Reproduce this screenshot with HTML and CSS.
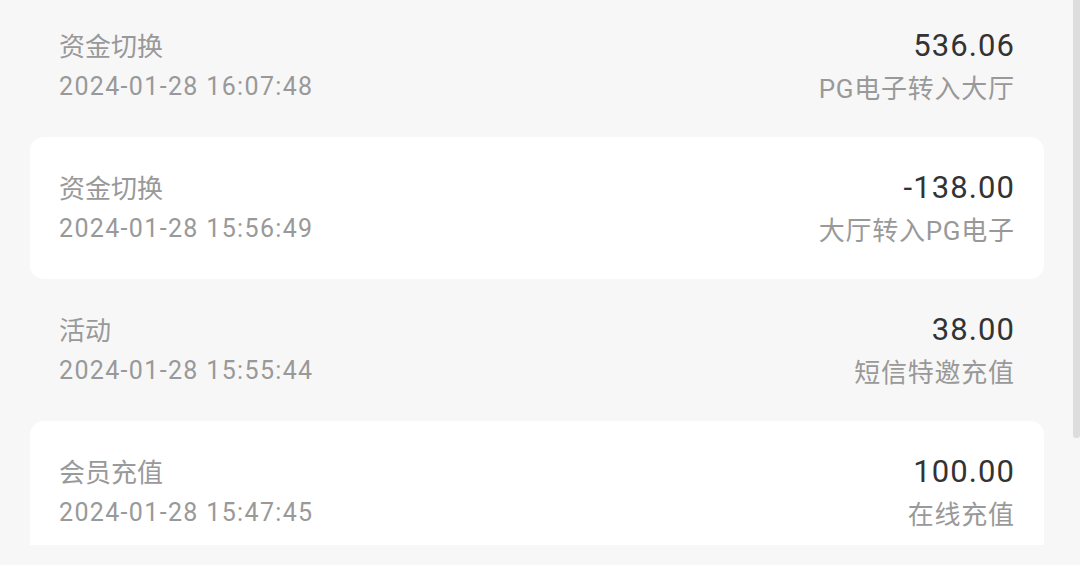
FILE: index.html
```html
<!DOCTYPE html>
<html lang="zh-CN">
<head>
<meta charset="utf-8">
<link rel="stylesheet" href="styles.css">
</head>
<body>
<div class="viewport">
  <div class="list">
    <div class="row">
      <div class="left"><div class="title">资金切换</div><div class="time">2024-01-28 16:07:48</div></div>
      <div class="right"><div class="amount">536.06</div><div class="desc">PG电子转入大厅</div></div>
    </div>
    <div class="row card">
      <div class="left"><div class="title">资金切换</div><div class="time">2024-01-28 15:56:49</div></div>
      <div class="right"><div class="amount">-138.00</div><div class="desc">大厅转入PG电子</div></div>
    </div>
    <div class="row">
      <div class="left"><div class="title">活动</div><div class="time">2024-01-28 15:55:44</div></div>
      <div class="right"><div class="amount">38.00</div><div class="desc">短信特邀充值</div></div>
    </div>
    <div class="row card">
      <div class="left"><div class="title">会员充值</div><div class="time">2024-01-28 15:47:45</div></div>
      <div class="right"><div class="amount">100.00</div><div class="desc">在线充值</div></div>
    </div>
  </div>
  <div class="scroll-thumb"></div>
</div>
</body>
</html>
```
FILE: styles.css
```css
html, body {
  margin: 0;
  padding: 0;
  background: #f7f7f7;
}
body {
  width: 1080px;
  height: 565px;
  overflow: hidden;
  font-family: "Roboto", "Noto Sans CJK SC", sans-serif;
}
.viewport {
  position: relative;
  height: 545px;
  overflow: hidden;
}
.list {
  margin-top: -5px;
  display: flex;
  flex-direction: column;
}
.row {
  height: 142px;
  box-sizing: border-box;
  margin: 0 36px 0 30px;
  padding: 32px 30px 0 29px;
  display: flex;
  justify-content: space-between;
  border-radius: 14px;
}
.card {
  background: #ffffff;
}
.left, .right {
  display: flex;
  flex-direction: column;
}
.right {
  align-items: flex-end;
}
.title {
  font-size: 26px;
  line-height: 40px;
  color: #999999;
}
.time {
  font-size: 25px;
  line-height: 40px;
  letter-spacing: 1.35px;
  color: #999999;
}
.amount {
  font-size: 31px;
  line-height: 38px;
  letter-spacing: 1.1px;
  margin-right: -1.1px;
  color: #333333;
}
.desc {
  font-size: 26px;
  line-height: 48px;
  letter-spacing: 0.75px;
  margin-right: -0.75px;
  color: #999999;
}
.scroll-thumb {
  position: absolute;
  top: 0;
  right: 0;
  width: 7px;
  height: 438px;
  background: #dddddd;
  border-radius: 0 0 3px 3px;
}
```
